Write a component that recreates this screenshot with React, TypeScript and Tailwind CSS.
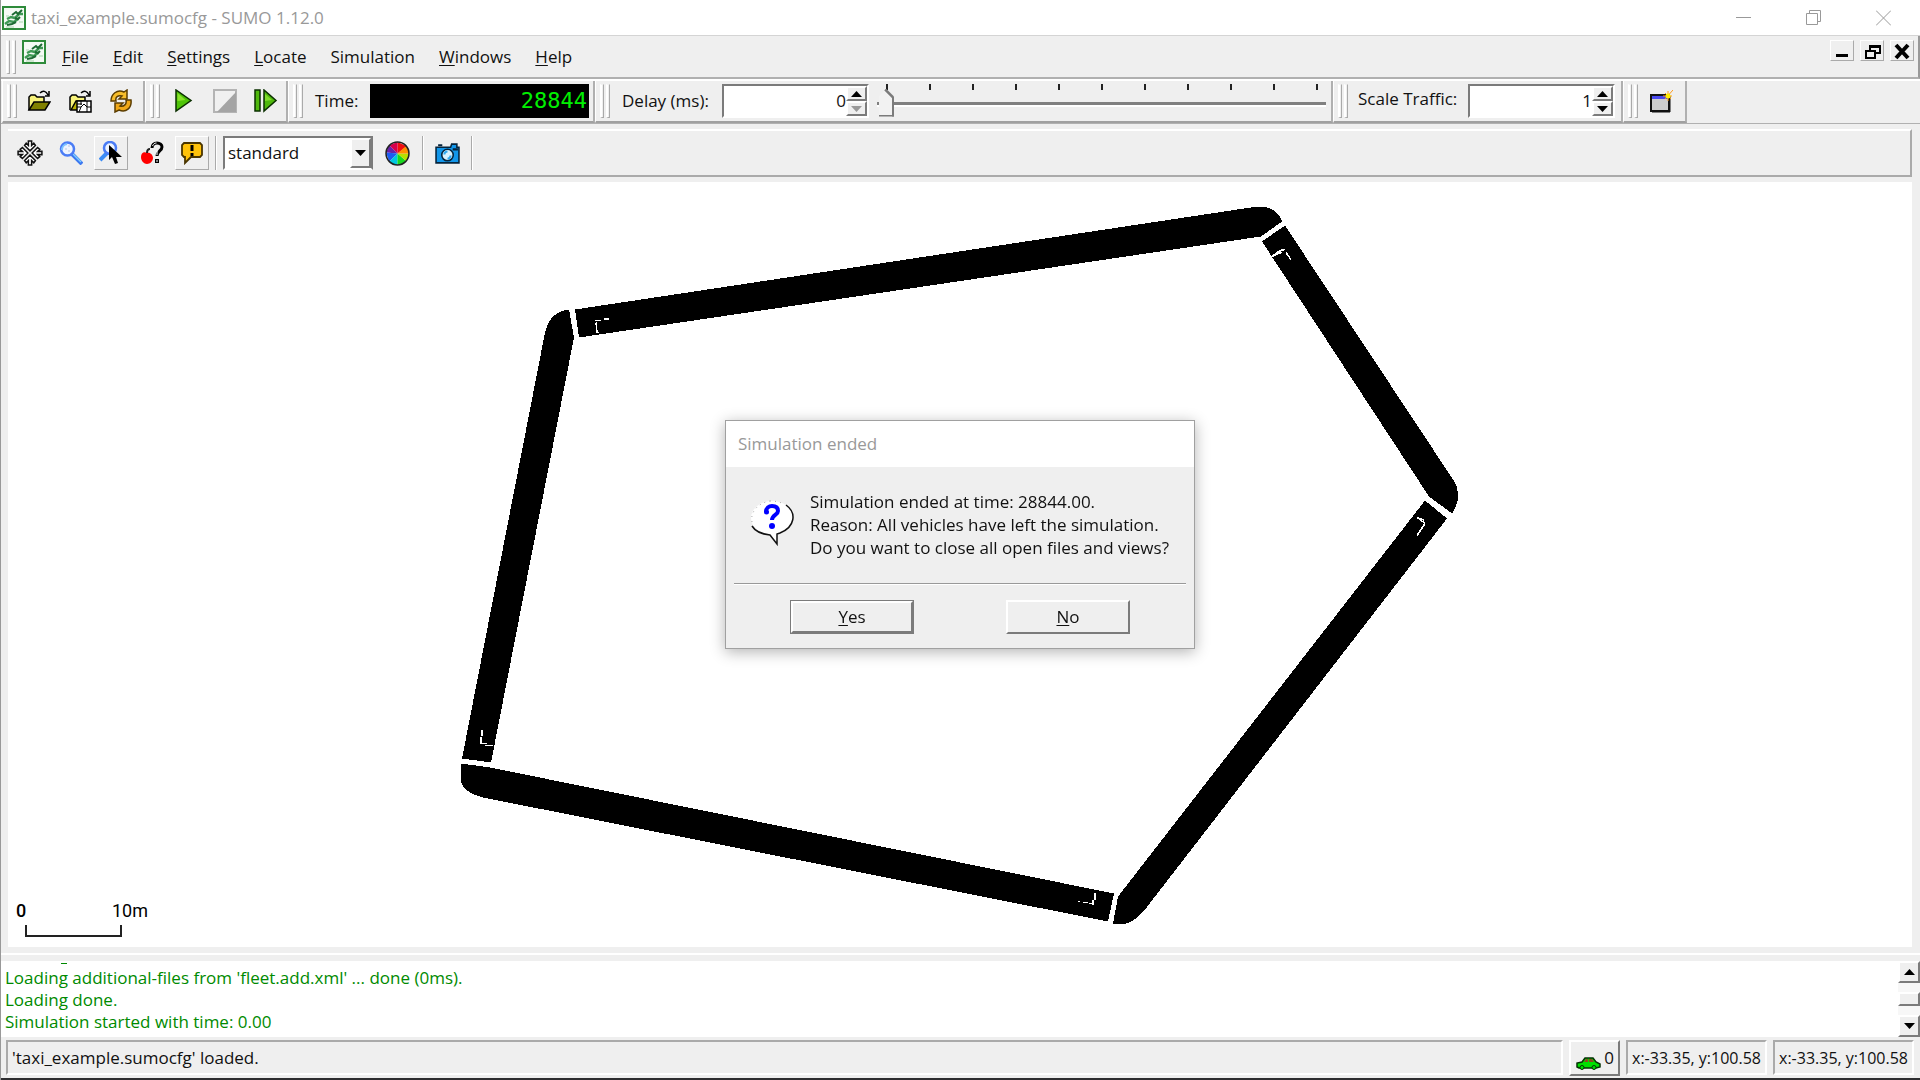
import clsx from 'clsx'
import type { ReactNode } from 'react'

// ─── Icons ────────────────────────────────────────────────────────────────────

interface SvgProps {
  children: ReactNode
  size?: number
  className?: string
}

function Svg({ children, size = 24, className }: SvgProps) {
  return (
    <svg width={size} height={size} viewBox="0 0 24 24" fill="none" aria-hidden="true" className={className}>
      {children}
    </svg>
  )
}

function SumoLogo() {
  return (
    <Svg className="shrink-0">
      <rect x="1" y="1" width="22" height="22" fill="#f4faf4" stroke="#2e8b3a" strokeWidth="2" />
      <path d="M3 18 7 15 12 16 16 13 M5 13 9 11 13 12 17 8 21 8" stroke="#3f9a55" strokeWidth="2.500" />
      <path d="M10 9 14 6 16 8 20 4 M5 19 10 18 14 16 M13 12 16 13 18 11" stroke="#1d6b33" strokeWidth="2" />
      <path d="M4 10h3M4 21h8M17 16h4" stroke="#a8d5ae" />
    </Svg>
  )
}

function FolderBase() {
  return (
    <>
      <path d="M2 21V8l2-2h4l2 2h7v5" fill="#f7f27a" stroke="#000" strokeWidth="1.5" />
      <path d="M13 4c3-3 6-2 8 2M22 2v5h-4" stroke="#000" strokeWidth="1.5" />
    </>
  )
}

function OpenIcon() {
  return (
    <Svg>
      <FolderBase />
      <path d="M2 21 7 13h16l-5 8z" fill="#808000" stroke="#000" strokeWidth="1.5" />
    </Svg>
  )
}

function OpenNetIcon() {
  return (
    <Svg>
      <FolderBase />
      <path d="M3 21 8 12h9v9z" fill="#b8b000" stroke="#000" strokeWidth="1.5" />
      <path d="M9 12h14v11H9z" fill="#fff" stroke="#000" strokeWidth="1.5" />
      <path d="M9 18h4l3-3 3 3h4M13 12v4M13 18l-2 5M19 12v11M9 15h5" stroke="#000" />
    </Svg>
  )
}

function ReloadIcon() {
  return (
    <Svg>
      <path
        d="M2 12C2 5 8 0 15 3l3-2v9h-8l3-3c-4-1-7 1-6 5z"
        fill="#f7bd2a"
        stroke="#5b3d00"
        strokeWidth="1.5"
      />
      <path
        d="M22 11c1 8-5 13-12 10l-4 2v-9h8l-3 3c4 1 7-2 6-6z"
        fill="#f0a818"
        stroke="#5b3d00"
        strokeWidth="1.5"
      />
    </Svg>
  )
}

function PlayIcon() {
  return (
    <Svg>
      <path d="M4 1v21L19 11.500z" fill="#4fc408" stroke="#0b3000" strokeWidth="1.5" />
      <path d="M5.500 4v8l8-1z" fill="#8be32c" />
    </Svg>
  )
}

function StopIcon() {
  return (
    <Svg>
      <path d="M1 1h22v22H1z" fill="#f0f0f0" stroke="#b4b4b4" strokeWidth="2" />
      <path d="M23 3v20H4z" fill="#a4a4a4" />
    </Svg>
  )
}

function StepIcon() {
  return (
    <Svg>
      <path d="M1 1h5v21H1zM10 1v21L22 11.500z" fill="#4fb80c" stroke="#0b3000" strokeWidth="1.5" />
      <path d="M11 5v7l7-1z" fill="#7fdc2a" />
    </Svg>
  )
}

function NewViewIcon() {
  return (
    <Svg>
      <path d="M2 6h18v16H2z" fill="#cdcdcd" stroke="#111" strokeWidth="2" />
      <path d="M3 7h16v3H3z" fill="#4a4af0" />
      <path d="M21 7v16H3" stroke="#111" />
      <path d="M19 2v10M14 7h9M16 4l6 6M24 1l-8 9" stroke="#ff9a1a" />
      <circle cx="19" cy="7" r="2.500" fill="#ffee00" />
    </Svg>
  )
}

function RecenterIcon() {
  return (
    <Svg size={26}>
      <g fill="#fff" stroke="#111" strokeWidth="1.400">
        {[0, 90, 180, 270].map((angle) => (
          <path
            key={angle}
            transform={`rotate(${angle} 12 12)`}
            d="M10.500 1h3v4l2-2 1.500 2L12 10 7 5l1.500-2 2 2z"
          />
        ))}
      </g>
    </Svg>
  )
}

function ZoomIcon() {
  return (
    <Svg>
      <path d="M13 13 23 23" stroke="#3c78f0" strokeWidth="4" />
      <path d="M14 13 22 21" stroke="#7ed0ff" strokeWidth="1.500" />
      <circle cx="8.500" cy="8" r="6.500" fill="#eef4ff" stroke="#4a7cf5" strokeWidth="2.500" />
      <path d="M3 9a6 6 0 0 1 5-6" stroke="#7ec4ff" strokeWidth="2" />
      <path d="M6 8h2M9 5h2M9 10h2" stroke="#bcc8dd" />
    </Svg>
  )
}

function ZoomStyleIcon() {
  return (
    <Svg>
      <path d="M8 12 1 19" stroke="#3c8cf5" strokeWidth="4" />
      <circle cx="11" cy="7" r="6" fill="#eef4ff" stroke="#4a7cf5" strokeWidth="2.500" />
      <path d="M10 4v15l3-3 3 7 3-1-2-6h6z" fill="#000" />
    </Svg>
  )
}

function LocateIcon() {
  return (
    <Svg>
      <path d="M7 12c-3-2-6 0-6 4s3 7 6 7 6-3 6-6-3-6-6-5z" fill="#f00" />
      <path d="M7 12c0-2 1-4 3-4" stroke="#222" strokeWidth="2" />
      <path d="M12 7c0-3 2-5 5-5s5 2 5 4c0 4-5 4-5 9" stroke="#000" strokeWidth="3" />
      <path d="M12.500 5c1-2 2-3 4-3M17 10v4" stroke="#fff" />
      <path d="M15 18h4v4h-4z" fill="#000" />
      <path d="M17 19v2" stroke="#fff" />
    </Svg>
  )
}

function TooltipIcon() {
  return (
    <Svg>
      <path d="M4 2h16l2 2v10l-2 2h-9l-6 6v-6H4l-2-2V4z" fill="#ffc20a" stroke="#4a3500" strokeWidth="1.800" />
      <path d="M12 4v6M12 12v3" stroke="#000" strokeWidth="3" />
    </Svg>
  )
}

function ColorWheelIcon() {
  return (
    <Svg size={25}>
      <path d="M12 12V1l9 4z" fill="#f01010" />
      <path d="M12 12V1L4 4z" fill="#d8004c" />
      <path d="M12 12 4 4 1 11z" fill="#6a1fa8" />
      <path d="M12 12 1 11 4 20z" fill="#1c5cf0" />
      <path d="M12 12 4 20c2 3 5 3 8 3z" fill="#00c8e0" />
      <path d="M12 12v11c4 0 7-1 8-4z" fill="#18d820" />
      <path d="M12 12 20 19c3-2 3-5 3-7z" fill="#b8e000" />
      <path d="M12 12h11c0-3-1-5-3-7z" fill="#ff9000" />
      <circle cx="12" cy="12" r="11" stroke="#222" strokeWidth="1.500" />
    </Svg>
  )
}

function CameraIcon() {
  return (
    <Svg size={25}>
      <path d="M1 6h14l1-3h5v3h2v15H1z" fill="#1196ea" stroke="#06243c" strokeWidth="1.500" />
      <path d="M3 4h4M17 8h5" stroke="#06243c" strokeWidth="2" />
      <circle cx="12" cy="13.500" r="5.500" fill="#d8f2ff" stroke="#06243c" strokeWidth="1.500" />
      <path d="M9 13a3 3 0 0 1 3-3M12 17a3 3 0 0 0 3-3" stroke="#2fa8f0" strokeWidth="2" />
    </Svg>
  )
}

function CarIcon() {
  return (
    <svg width="26" height="14" viewBox="0 0 26 14" aria-hidden="true">
      <path d="M2 11V7l5-1 3-4h8l3 4 4 2v3l-4 1H4z" fill="#00e000" stroke="#043004" strokeWidth="1.500" />
      <path d="M9 6l2-3h2v3zM14 3h3l2 3h-5z" fill="#8b4a20" />
      <circle cx="7" cy="11.500" r="2" fill="#00e000" stroke="#043004" />
      <circle cx="19" cy="11.500" r="2" fill="#00e000" stroke="#043004" />
    </svg>
  )
}

function QuestionBubble() {
  return (
    <svg width="46" height="46" viewBox="0 0 46 46" fill="none" aria-hidden="true" className="shrink-0">
      <ellipse cx="22" cy="18" rx="21" ry="17" fill="#fff" />
      <path d="M19 34h8v10z" fill="#fff" />
      <path d="M36 5c11 8 9 22-6 28l-3 1v10l-7-9C11 34 5 31 2 26" stroke="#111" strokeWidth="1.500" />
      <path d="M2 22C0 12 8 3 20 1M20 1c5 0 10 1 14 3" stroke="#aaa" strokeDasharray="1 4" />
      <path d="M16 12c0-4 3-6 6-6 4 0 6 2 6 5 0 4-6 4-6 9" stroke="#00f" strokeWidth="4" />
      <circle cx="16.500" cy="12" r="2.500" fill="#00f" />
      <circle cx="22" cy="26" r="3" fill="#00f" />
    </svg>
  )
}

function Triangle({ up, muted }: { up?: boolean; muted?: boolean }) {
  return (
    <svg width="11" height="6" viewBox="0 0 11 6" aria-hidden="true">
      <path d={up ? 'M0 6 5.500 0 11 6z' : 'M0 0h11L5.500 6z'} fill={muted ? '#999' : '#000'} />
    </svg>
  )
}

// ─── Toolbar parts ────────────────────────────────────────────────────────────

const raised = 'border-2 border-t-white border-l-white border-b-[#7b7b7b] border-r-[#7b7b7b] bg-[#efefef]'
const flatRaised = 'border border-t-white border-l-white border-b-[#aaa] border-r-[#aaa] bg-[#efefef]'

function Grip() {
  return (
    <div className="flex h-[34px] shrink-0 gap-[2px]">
      <span className="w-1 border border-l-2 border-b-[#aaa] border-l-white border-r-[#aaa] border-t-transparent" />
      <span className="w-1 border border-l-2 border-b-[#aaa] border-l-white border-r-[#aaa] border-t-transparent" />
    </div>
  )
}

function Section({ children, className }: { children: ReactNode; className?: string }) {
  return (
    <div
      className={clsx(
        'flex items-center border-b-2 border-l border-r-2 border-b-[#a0a0a0] border-l-white border-r-[#b0b0b0] pl-1',
        className,
      )}
    >
      <Grip />
      {children}
    </div>
  )
}

function ToolButton({ label, children }: { label: string; children: ReactNode }) {
  return (
    <button type="button" aria-label={label} className="flex h-[34px] w-[41px] items-center justify-center">
      {children}
    </button>
  )
}

function Spinner({ id, value, downMuted }: { id: string; value: string; downMuted?: boolean }) {
  return (
    <div className="flex h-[34px] w-[147px] border-2 border-b-white border-l-[#7b7b7b] border-r-white border-t-[#7b7b7b] bg-white">
      <input id={id} type="text" defaultValue={value} className="min-w-0 flex-1 bg-transparent text-right outline-none" />
      <div className="flex w-[21px] flex-col">
        <button type="button" aria-label="Increase" className={clsx('flex flex-1 items-center justify-center', raised)}>
          <Triangle up />
        </button>
        <button type="button" aria-label="Decrease" className={clsx('flex flex-1 items-center justify-center', raised)}>
          <Triangle muted={downMuted} />
        </button>
      </div>
    </div>
  )
}

function DelaySlider() {
  return (
    <div className="ml-2 flex h-[36px] w-[449px] flex-col">
      <div className="ml-[9px] mr-2 flex justify-between pt-px">
        {Array.from({ length: 11 }).map((_, i) => (
          <span key={i} className="h-[6px] w-[2px] bg-[#222]" />
        ))}
      </div>
      <input
        type="range"
        aria-label="Delay slider"
        min="0"
        max="1000"
        defaultValue="0"
        className="h-7 w-full appearance-none bg-transparent [&::-webkit-slider-runnable-track]:h-[5px] [&::-webkit-slider-runnable-track]:border-b-2 [&::-webkit-slider-runnable-track]:border-t-[3px] [&::-webkit-slider-runnable-track]:border-b-white [&::-webkit-slider-runnable-track]:border-t-[#808080] [&::-webkit-slider-thumb]:-mt-[16px] [&::-webkit-slider-thumb]:ml-[2px] [&::-webkit-slider-thumb]:h-[28px] [&::-webkit-slider-thumb]:w-[15px] [&::-webkit-slider-thumb]:appearance-none [&::-webkit-slider-thumb]:border-b-2 [&::-webkit-slider-thumb]:border-r-2 [&::-webkit-slider-thumb]:border-[#7b7b7b] [&::-webkit-slider-thumb]:bg-[linear-gradient(225deg,#7b7b7b_0_6px,#f2f2f2_7px)] [&::-webkit-slider-thumb]:[clip-path:polygon(7px_0,100%_8px,100%_100%,0_100%,0_8px)]"
      />
    </div>
  )
}

// ─── Window chrome ────────────────────────────────────────────────────────────

function TitleBar() {
  return (
    <header className="flex h-9 items-center justify-between border-b border-[#d4d4d4] bg-white pl-px pr-[29px] text-[#999]">
      <div className="flex items-center gap-[5px]">
        <SumoLogo />
        <h1>taxi_example.sumocfg - SUMO 1.12.0</h1>
      </div>
      <div className="flex gap-[55px]">
        <button type="button" aria-label="Minimize">
          <svg width="15" height="16" stroke="#999" fill="none"><path d="M0 7.500h15" /></svg>
        </button>
        <button type="button" aria-label="Restore">
          <svg width="15" height="16" stroke="#999" fill="none"><path d="M.5 3.500h11v11H.5zM3.500 3.500v-3h11v11h-3" /></svg>
        </button>
        <button type="button" aria-label="Close">
          <svg width="15" height="16" stroke="#999" fill="none"><path d="M0 .5l15 15M15 .5l-15 15" /></svg>
        </button>
      </div>
    </header>
  )
}

const menus = [
  { key: 'F', rest: 'ile' },
  { key: 'E', rest: 'dit' },
  { key: 'S', rest: 'ettings' },
  { key: 'L', rest: 'ocate' },
  { key: '', rest: 'Simulation' },
  { key: 'W', rest: 'indows' },
  { key: 'H', rest: 'elp' },
]

function Mnemonic({ letter, rest }: { letter: string; rest: string }) {
  return (
    <>
      <span className="underline decoration-1 underline-offset-2">{letter}</span>
      {rest}
    </>
  )
}

function MenuBar() {
  return (
    <div className="flex h-[43px] items-center border-b-2 border-r-2 border-b-[#b0b0b0] border-r-[#999] pl-[5px] pr-1">
      <Grip />
      <div className="ml-[6px] self-start pt-1">
        <SumoLogo />
      </div>
      <nav className="ml-1 flex flex-1">
        {menus.map((menu) => (
          <button key={menu.rest} type="button" className="px-3">
            <Mnemonic letter={menu.key} rest={menu.rest} />
          </button>
        ))}
      </nav>
      <div className="flex gap-[6px] self-start pt-1">
        <button type="button" aria-label="Minimize view" className={clsx('h-[21px] w-6', flatRaised)}>
          <svg width="22" height="18" stroke="#000" strokeWidth="3"><path d="M5 13.500h12" /></svg>
        </button>
        <button type="button" aria-label="Restore view" className={clsx('h-[21px] w-6', flatRaised)}>
          <svg width="22" height="18" stroke="#000" strokeWidth="2" fill="none">
            <path d="M5 9h9v7H5zM9 8V4h10v7h-4M5 9h9M9 5h10" />
          </svg>
        </button>
        <button type="button" aria-label="Close view" className={clsx('h-[21px] w-6', flatRaised)}>
          <svg width="22" height="18" stroke="#000" strokeWidth="4"><path d="M5 3l12 13M17 3 5 16" /></svg>
        </button>
      </div>
    </div>
  )
}

function MainToolbar() {
  return (
    <div className="flex h-[45px] border-b border-b-[#b0b0b0] border-t-2 border-t-white pl-px">
      <Section className="pr-[2px]">
        <div className="ml-px flex">
          <ToolButton label="Open simulation"><OpenIcon /></ToolButton>
          <ToolButton label="Open network"><OpenNetIcon /></ToolButton>
          <ToolButton label="Reload"><ReloadIcon /></ToolButton>
        </div>
      </Section>
      <Section>
        <div className="ml-[3px] flex">
          <ToolButton label="Run"><PlayIcon /></ToolButton>
          <ToolButton label="Stop"><StopIcon /></ToolButton>
          <ToolButton label="Step"><StepIcon /></ToolButton>
        </div>
      </Section>
      <Section className="pr-1">
        <span className="ml-3 w-[55px]">Time:</span>
        <output
          aria-label="Time"
          className="flex h-[34px] w-[219px] items-center justify-end bg-black pr-0.5 font-['DejaVu_Sans_Mono',monospace] text-[22px] leading-none text-[#00f000]"
        >
          28844
        </output>
      </Section>
      <Section className="pr-[5px]">
        <label htmlFor="delay" className="ml-3 w-[100px]">Delay (ms):</label>
        <Spinner id="delay" value="0" downMuted />
        <DelaySlider />
      </Section>
      <Section className="pr-[6px]">
        <label htmlFor="scale" className="ml-[10px] w-[110px] pb-1">Scale Traffic:</label>
        <Spinner id="scale" value="1" />
      </Section>
      <Section className="pr-1">
        <div className="ml-[2px]">
          <ToolButton label="New view"><NewViewIcon /></ToolButton>
        </div>
      </Section>
    </div>
  )
}

function Divider() {
  return <span className="h-[34px] w-[2px] border-l border-r border-l-[#aaa] border-r-white" />
}

function ViewToolbar() {
  return (
    <div className="ml-[7px] mr-2 mt-[5px] flex h-12 items-center border-b-2 border-r-2 border-t-2 border-b-[#aaa] border-r-[#aaa] border-t-white pl-px">
      <ToolButton label="Recenter view"><RecenterIcon /></ToolButton>
      <ToolButton label="Zoom"><ZoomIcon /></ToolButton>
      <button type="button" aria-label="Zoom style" className={clsx('ml-[3px] flex h-[34px] w-[34px] items-center justify-center', flatRaised)}>
        <ZoomStyleIcon />
      </button>
      <div className="mx-[3px]">
        <ToolButton label="Locate object"><LocateIcon /></ToolButton>
      </div>
      <button type="button" aria-label="Show tooltips" className={clsx('flex h-[34px] w-[34px] items-center justify-center', flatRaised)}>
        <TooltipIcon />
      </button>
      <span className="ml-[6px] flex">
        <Divider />
      </span>
      <div className="relative ml-[6px] h-[34px] w-[150px] border-2 border-b-white border-l-[#7b7b7b] border-r-[#7b7b7b] border-t-[#7b7b7b] bg-white">
        <select aria-label="View scheme" className="h-full w-full appearance-none bg-transparent pl-[3px] outline-none">
          <option>standard</option>
        </select>
        <span className={clsx('pointer-events-none absolute inset-y-0 right-0 flex w-[21px] items-center justify-center', raised)}>
          <Triangle />
        </span>
      </div>
      <div className="mx-1">
        <ToolButton label="Edit colors"><ColorWheelIcon /></ToolButton>
      </div>
      <Divider />
      <div className="mx-[3px]">
        <ToolButton label="Snapshot"><CameraIcon /></ToolButton>
      </div>
      <Divider />
    </div>
  )
}

// ─── Network view ─────────────────────────────────────────────────────────────

const roads = [
  'M575 310 1254 207.500Q1268 206 1275 212 1281 217 1282 222L1261 237 579 338z',
  'M1285 226 1455 483Q1458 488 1458 500 1456 508 1452 514L1429 497 1262 242z',
  'M1425 501 1447 519 1145 910Q1135 922 1126 924L1113 924 1118 897z',
  'M461 764 490 768 1114 894 1108 922 483 798Q461 792 461 780z',
  'M462 759 545 333Q548 322 553 317 560 311 569 310L574 338 491 763z',
]

const laneArrows = [
  'M595 321h6M604 319.500h5M596 323l1 10h2',
  'M1272 257l8-6 1 2zM1280 251l5-1M1286 253l5 7',
  'M1417 518l7 5-1-3zM1425 524l-8 12',
  'M482 730v6M481 737v7h6M485 746h8',
  'M1095 893v7M1093 900v5M1089 904h3M1083 903h5M1078 902h2',
]

function NetworkView() {
  return (
    <main className="relative ml-[7px] mr-2 mt-[5px] min-h-0 flex-1 basis-[764px] bg-white">
      <svg viewBox="8 183 1904 764" className="absolute inset-0 h-full w-full" role="img" aria-label="Road network">
        <g shapeRendering="crispEdges">
          {roads.map((d) => (
            <path key={d} d={d} fill="#000" />
          ))}
          {laneArrows.map((d) => (
            <path key={d} d={d} fill="none" stroke="#fff" strokeWidth="1.500" />
          ))}
        </g>
      </svg>
      <div className="absolute bottom-[10px] left-2 font-['Roboto',sans-serif] text-[18px] leading-5 text-black">
        <div className="flex w-[132px] justify-between">
          <span className="font-medium">0</span>
          <span>10m</span>
        </div>
        <div className="ml-[9px] mt-[4px] h-[12px] w-[97px] border-2 border-t-0 border-[#222]" />
      </div>
    </main>
  )
}

// ─── Message log and status bar ───────────────────────────────────────────────

const messages = [
  "Loading additional-files from 'fleet.add.xml' ... done (0ms).",
  'Loading done.',
  'Simulation started with time: 0.00',
]

function MessageLog() {
  return (
    <div className="flex h-[76px] bg-white">
      <div role="log" className="flex flex-1 flex-col justify-end overflow-hidden pb-1 pl-1 leading-[22px] text-[#008a00]">
        <span aria-hidden="true" className="mb-[3px] ml-[56px] h-px w-[6px] bg-[#008a00]" />
        {messages.map((message) => (
          <p key={message}>{message}</p>
        ))}
      </div>
      <div className="flex w-[22px] flex-col bg-[#f7f7f7]">
        <button type="button" aria-label="Scroll up" className={clsx('flex h-[22px] items-center justify-center', raised)}>
          <Triangle up />
        </button>
        <div className="flex flex-1 flex-col justify-center">
          <div className={clsx('h-[14px]', raised)} />
        </div>
        <button type="button" aria-label="Scroll down" className={clsx('flex h-[22px] items-center justify-center', raised)}>
          <Triangle />
        </button>
      </div>
    </div>
  )
}

const sunken =
  'flex h-[35px] items-center whitespace-nowrap border-2 border-b-white border-r-white border-l-[#aaa] border-t-[#aaa]'

function StatusBar() {
  return (
    <footer className="flex h-[43px] items-center gap-[6px] border-b-2 border-[#2e2e30] pl-[5px] pr-[6px]">
      <div className={clsx(sunken, 'flex-1 pl-1')}>'taxi_example.sumocfg' loaded.</div>
      <button type="button" className={clsx('flex h-[36px] w-[51px] items-center justify-between px-1', raised)}>
        <span className="pt-[10px]">
          <CarIcon />
        </span>
        0
      </button>
      <div className={clsx(sunken, 'w-[141px] justify-center text-[16px]')}>x:-33.35, y:100.58</div>
      <div className={clsx(sunken, 'w-[141px] justify-center text-[16px]')}>x:-33.35, y:100.58</div>
    </footer>
  )
}

// ─── Dialog ───────────────────────────────────────────────────────────────────

function EndDialog() {
  return (
    <div className="fixed inset-0 flex items-center justify-center pb-3">
      <div
        role="dialog"
        aria-labelledby="dialog-title"
        className="w-[470px] border border-[#a0a0a0] bg-[#efefef] shadow-[0_3px_14px_rgba(0,0,0,0.3)]"
      >
        <h2 id="dialog-title" className="flex h-[46px] items-center bg-white px-3 text-[#999]">
          Simulation ended
        </h2>
        <div className="mx-2">
          <div className="flex gap-[14px] px-4 pb-6 pt-[23px]">
            <div className="pt-[10px]">
              <QuestionBubble />
            </div>
            <div className="whitespace-nowrap leading-[23px]">
              <p>Simulation ended at time: 28844.00.</p>
              <p>Reason: All vehicles have left the simulation.</p>
              <p>Do you want to close all open files and views?</p>
            </div>
          </div>
          <div className="border-b border-t border-b-white border-t-[#999]" />
          <div className="flex justify-between px-14 pb-[14px] pt-[15px]">
            <button type="button" className="h-[34px] w-[124px] border border-[#7b7b7b]">
              <span className={clsx('flex h-full items-center justify-center', raised)}>
                <span>
                  <Mnemonic letter="Y" rest="es" />
                </span>
              </span>
            </button>
            <button type="button" className={clsx('h-[34px] w-[124px]', raised)}>
              <Mnemonic letter="N" rest="o" />
            </button>
          </div>
        </div>
      </div>
    </div>
  )
}

export default function App() {
  return (
    <div className="flex min-h-screen flex-col border-l border-[#999] bg-[#efefef] font-['Open_Sans','Noto_Sans',sans-serif] text-[17px] leading-6 text-[#111]">
      <TitleBar />
      <MenuBar />
      <MainToolbar />
      <ViewToolbar />
      <NetworkView />
      <div className="my-[6px] h-[2px] bg-white" />
      <MessageLog />
      <StatusBar />
      <EndDialog />
    </div>
  )
}
